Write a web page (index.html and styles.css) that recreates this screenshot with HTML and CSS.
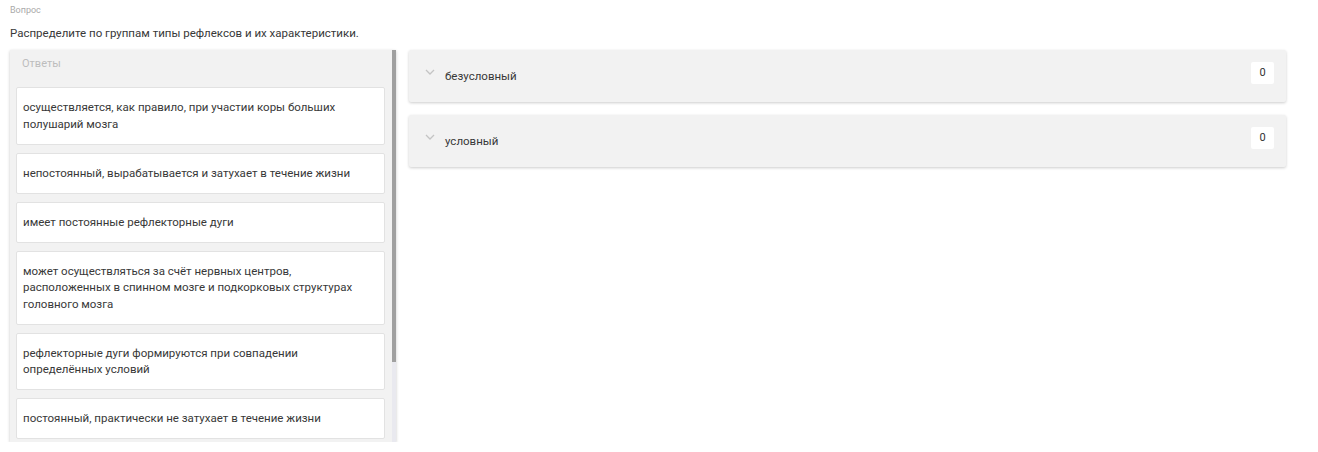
FILE: index.html
```html
<!DOCTYPE html>
<html lang="ru">
<head>
<meta charset="utf-8">
<link rel="stylesheet" href="styles.css">
</head>
<body>
<div class="page">
  <div class="label">Вопрос</div>
  <div class="question">Распределите по группам типы рефлексов и их характеристики.</div>
  <div class="board">
    <div class="answers">
      <div class="answers-inner">
        <div class="answers-title">Ответы</div>
        <div class="cards">
          <div class="card">осуществляется, как правило, при участии коры больших полушарий мозга</div>
          <div class="card">непостоянный, вырабатывается и затухает в течение жизни</div>
          <div class="card">имеет постоянные рефлекторные дуги</div>
          <div class="card">может осуществляться за счёт нервных центров, расположенных в спинном мозге и подкорковых структурах головного мозга</div>
          <div class="card">рефлекторные дуги формируются при совпадении определённых условий</div>
          <div class="card">постоянный, практически не затухает в течение жизни</div>
        </div>
      </div>
      <div class="scrollbar"><div class="thumb"></div></div>
    </div>
    <div class="groups">
      <div class="group">
        <svg class="chev" width="10" height="6" viewBox="0 0 10 6"><path d="M1 1 L5 5 L9 1" fill="none" stroke="#c4c4c4" stroke-width="1.3"/></svg>
        <span class="group-name">безусловный</span>
        <span class="count">0</span>
      </div>
      <div class="group">
        <svg class="chev" width="10" height="6" viewBox="0 0 10 6"><path d="M1 1 L5 5 L9 1" fill="none" stroke="#c4c4c4" stroke-width="1.3"/></svg>
        <span class="group-name">условный</span>
        <span class="count">0</span>
      </div>
    </div>
  </div>
</div>
</body>
</html>
```
FILE: styles.css
```css
html, body {
  margin: 0;
  padding: 0;
  background: #ffffff;
}
body {
  font-family: Roboto, "Liberation Sans", Arial, sans-serif;
  color: #333333;
}
.page {
  padding: 4px 32px 0 10px;
}
.label {
  font-size: 9px;
  line-height: 11px;
  color: #aaaaaa;
  padding-top: 1px;
}
.question {
  margin-top: 10px;
  font-size: 11.5px;
  line-height: 14px;
  color: #383838;
}
.board {
  margin-top: 10px;
  display: flex;
  align-items: flex-start;
  gap: 13px;
}
.answers {
  width: 386px;
  height: 392px;
  background: #f2f2f2;
  box-shadow: 0 1px 3px rgba(0, 0, 0, 0.22);
  display: flex;
  flex: none;
}
.answers-inner {
  flex: 1;
  overflow: hidden;
  padding: 0 7px 0 6px;
}
.scrollbar {
  width: 4px;
  background: #e9e9ef;
  flex: none;
}
.thumb {
  height: 312px;
  background: #a0a0a0;
}
.answers-title {
  font-size: 11px;
  line-height: 14px;
  color: #bdbdbd;
  padding: 7px 0 0 6px;
  height: 30px;
}
.cards {
  display: flex;
  flex-direction: column;
  gap: 8px;
}
.card {
  background: #ffffff;
  border: 1px solid #e2e2e2;
  border-radius: 2px;
  padding: 11.25px 26px 11.25px 6px;
  font-size: 11.5px;
  line-height: 16.5px;
  color: #383838;
}
.groups {
  flex: 1;
  display: flex;
  flex-direction: column;
  gap: 13px;
}
.group {
  height: 52px;
  box-sizing: border-box;
  background: #f2f2f2;
  box-shadow: 0 1px 3px rgba(0, 0, 0, 0.2);
  border-radius: 2px;
  display: flex;
  align-items: center;
  padding: 0 12px 0 16px;
}
.chev {
  margin-top: -8px;
  margin-right: 10px;
}
.group-name {
  flex: 1;
  font-size: 11.5px;
  color: #383838;
}
.count {
  background: #ffffff;
  border-radius: 2px;
  min-width: 23px;
  height: 22px;
  line-height: 22px;
  text-align: center;
  font-size: 11px;
  color: #333333;
  margin-top: -7px;
}
```
